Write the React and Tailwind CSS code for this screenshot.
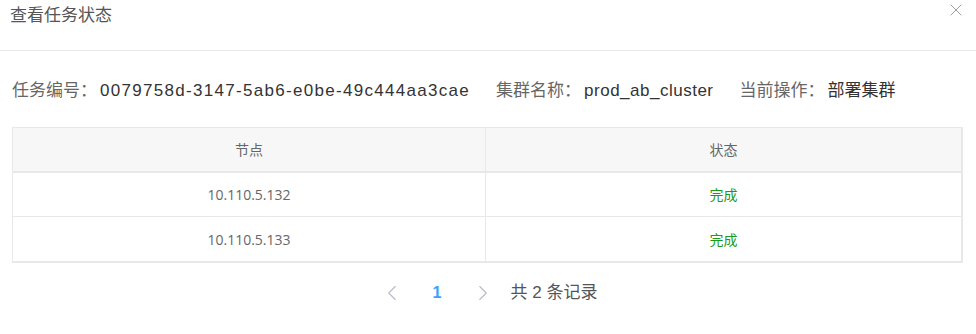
import { X, ChevronLeft, ChevronRight } from 'lucide-react';

const rows = [
    { node: '10.110.5.132', status: '完成' },
    { node: '10.110.5.133', status: '完成' },
];

export default function App() {
    return (
        <div className="relative w-[976px] h-[334px] bg-white font-['Liberation_Sans','Noto_Sans_CJK_SC',sans-serif]">
            <div className="h-[51px] border-b border-[#e8e8e8] px-[10px] pt-[4px]">
                <h3 className="text-[17px] leading-[24px] text-[#555]">查看任务状态</h3>
            </div>
            <button className="absolute right-[10px] top-[0px] text-[#999ca3]">
                <X size={20} strokeWidth={1.2} />
            </button>

            <div className="px-[12px] pt-[28px] flex items-center h-[52px] text-[17px] leading-[24px] text-[#333]">
                <span className="text-[#666] mr-[3px]">任务编号：</span>
                <span className="tracking-[1.3px]">0079758d-3147-5ab6-e0be-49c444aa3cae</span>
                <span className="ml-[26px] mr-[3px] text-[#666]">集群名称：</span>
                <span className="tracking-[0.5px]">prod_ab_cluster</span>
                <span className="ml-[26px] mr-[3px] text-[#666]">当前操作：</span>
                <span>部署集群</span>
            </div>

            <div className="ml-[12px] mt-[24px] w-[951px] border-l border-t border-[#e8e8e8] border-r-2 border-b-2 font-['Open_Sans','Noto_Sans_CJK_SC',sans-serif] text-[14px] text-[#666]">
                <div className="flex h-[45px] bg-[#f7f7f7] border-b-2 border-[#e8e8e8]">
                    <div className="w-[473px] border-r border-[#e8e8e8] flex items-center justify-center">节点</div>
                    <div className="flex-1 flex items-center justify-center">状态</div>
                </div>
                {rows.map((r, i) => (
                    <div key={i} className={`flex h-[44px] ${i < rows.length - 1 ? 'border-b border-[#e8e8e8]' : ''}`}>
                        <div className="w-[473px] border-r border-[#e8e8e8] flex items-center justify-center">{r.node}</div>
                        <div className="flex-1 flex items-center justify-center text-[#1c9a1c]">{r.status}</div>
                    </div>
                ))}
            </div>

            <div className="flex items-center justify-center mt-[17px] h-[26px]">
                <ChevronLeft size={26} strokeWidth={1} className="text-[#b8bcc4]" />
                <span className="ml-[28px] mr-[28px] text-[16px] font-bold text-[#409eff]">1</span>
                <ChevronRight size={26} strokeWidth={1} className="text-[#b8bcc4]" />
                <span className="ml-[15px] text-[17px] text-[#555]">共 2 条记录</span>
            </div>
        </div>
    );
}
